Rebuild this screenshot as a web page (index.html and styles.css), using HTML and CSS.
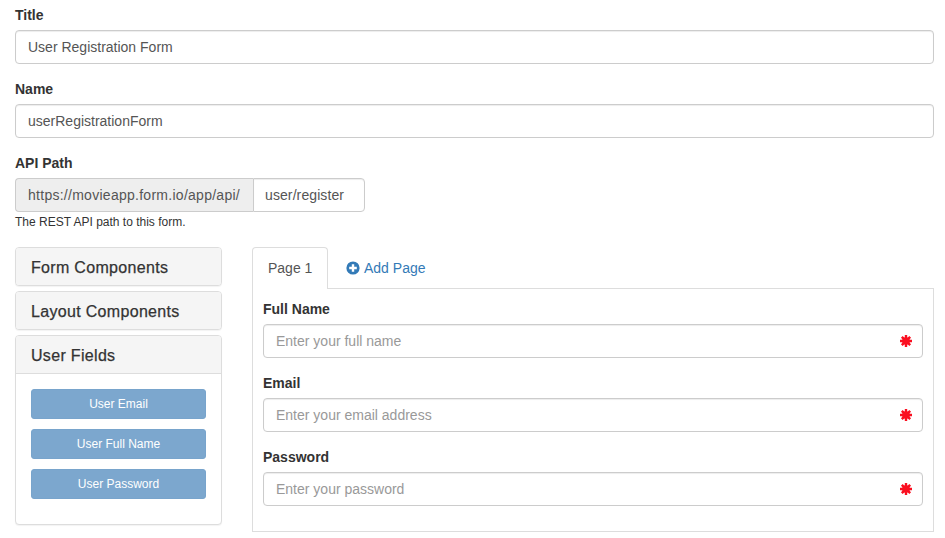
FILE: index.html
```html
<!DOCTYPE html>
<html lang="en">
<head>
<meta charset="utf-8">
<title>User Registration Form</title>
<link rel="stylesheet" href="styles.css">
</head>
<body>
<main class="page">
  <div class="form-group">
    <label class="label">Title</label>
    <input class="control" type="text" value="User Registration Form">
  </div>
  <div class="form-group">
    <label class="label">Name</label>
    <input class="control" type="text" value="userRegistrationForm">
  </div>
  <div class="form-group api-group">
    <label class="label">API Path</label>
    <div class="input-group">
      <span class="addon">https://movieapp.form.io/app/api/</span>
      <input class="control group-control" type="text" value="user/register">
    </div>
    <p class="help">The REST API path to this form.</p>
  </div>
  <div class="builder">
    <aside class="sidebar">
      <section class="panel"><h4 class="panel-heading">Form Components</h4></section>
      <section class="panel"><h4 class="panel-heading">Layout Components</h4></section>
      <section class="panel">
        <h4 class="panel-heading open">User Fields</h4>
        <div class="panel-body">
          <button class="field-btn" type="button">User Email</button>
          <button class="field-btn" type="button">User Full Name</button>
          <button class="field-btn" type="button">User Password</button>
        </div>
      </section>
    </aside>
    <div class="editor">
      <ul class="tabs">
        <li class="tab active">Page 1</li>
        <li class="tab add">
          <svg class="plus" viewBox="0 0 14 14" aria-hidden="true"><circle cx="7" cy="7" r="6.6" fill="#337ab7"/><path d="M3.2 7h7.6M7 3.2v7.6" stroke="#fff" stroke-width="2.4" fill="none"/></svg>
          Add Page
        </li>
      </ul>
      <div class="tab-content">
        <div class="form-group">
          <label class="label">Full Name</label>
          <div class="has-feedback">
            <input class="control" type="text" placeholder="Enter your full name">
            <svg class="req" viewBox="0 0 12 12" aria-hidden="true"><path d="M6 0v12M0 6h12M1.8 1.8l8.4 8.4M10.2 1.8l-8.4 8.4" stroke="#fa0f20" stroke-width="2.4" fill="none"/><circle cx="6" cy="6" r="3.8" fill="#fa0f20"/></svg>
          </div>
        </div>
        <div class="form-group">
          <label class="label">Email</label>
          <div class="has-feedback">
            <input class="control" type="text" placeholder="Enter your email address">
            <svg class="req" viewBox="0 0 12 12" aria-hidden="true"><path d="M6 0v12M0 6h12M1.8 1.8l8.4 8.4M10.2 1.8l-8.4 8.4" stroke="#fa0f20" stroke-width="2.4" fill="none"/><circle cx="6" cy="6" r="3.8" fill="#fa0f20"/></svg>
          </div>
        </div>
        <div class="form-group">
          <label class="label">Password</label>
          <div class="has-feedback">
            <input class="control" type="text" placeholder="Enter your password">
            <svg class="req" viewBox="0 0 12 12" aria-hidden="true"><path d="M6 0v12M0 6h12M1.8 1.8l8.4 8.4M10.2 1.8l-8.4 8.4" stroke="#fa0f20" stroke-width="2.4" fill="none"/><circle cx="6" cy="6" r="3.8" fill="#fa0f20"/></svg>
          </div>
        </div>
      </div>
    </div>
  </div>
</main>
</body>
</html>
```
FILE: styles.css
```css
* { box-sizing: border-box; }
html, body { margin: 0; height: 100%; background: #fff; overflow: hidden; }
body { font: 14px/20px "Liberation Sans", Arial, sans-serif; color: #333; }
.page { padding: 5px 11px 0 15px; }
.form-group { margin-bottom: 15px; }
.api-group { margin-bottom: 17px; }
.label { display: block; margin-bottom: 5px; font-weight: 700; }
.control {
  display: block; width: 100%; height: 34px; padding: 6px 12px;
  font: inherit; color: #555; background: #fff;
  border: 1px solid #ccc; border-radius: 4px;
  box-shadow: inset 0 1px 1px rgba(0,0,0,.075); outline: 0;
}
.control::placeholder { color: #999; opacity: 1; }
.input-group { display: flex; width: 350px; }
.addon {
  flex: none; width: 238px; height: 34px; padding: 6px 12px;
  color: #555; background: #eee; white-space: nowrap; letter-spacing: .27px;
  border: 1px solid #ccc; border-right: 0; border-radius: 4px 0 0 4px;
}
.group-control { flex: 1; min-width: 0; padding-left: 11px; letter-spacing: .1px; border-radius: 0 4px 4px 0; }
.help { margin: 3px 0 0; font-size: 12px; line-height: 15px; color: #333; }
.builder { display: grid; grid-template-columns: 207px 1fr; column-gap: 30px; align-items: start; }
.panel {
  margin-bottom: 5px; background: #fff;
  border: 1px solid #ddd; border-radius: 4px;
  box-shadow: 0 1px 1px rgba(0,0,0,.05); overflow: hidden;
}
.panel-heading {
  margin: 0; padding: 11px 15px 9px; height: 37px;
  font-size: 16px; line-height: 18px; font-weight: 400; color: #333;
  letter-spacing: .32px; -webkit-text-stroke: .25px #333;
  background: #f5f5f5;
}
.panel-heading.open { height: 38px; border-bottom: 1px solid #ddd; }
.panel-body { display: flex; flex-direction: column; gap: 10px; padding: 15px 15px 25px; }
.field-btn {
  display: block; width: 100%; height: 30px; padding: 5px 10px;
  font: 12px/18px "Liberation Sans", Arial, sans-serif; color: #fff;
  background: #7ca7ce; border: 1px solid #78a4cc; border-radius: 3px;
}
.tabs { display: flex; margin: 0; padding: 0; list-style: none; height: 42px; }
.tab { height: 42px; padding: 10px 15px; margin-right: 2px; color: #337ab7; border: 1px solid transparent; border-bottom: 0; white-space: nowrap; }
.tab.active {
  width: 76px; color: #555; background: #fff;
  border-color: #ddd; border-radius: 4px 4px 0 0;
  position: relative; z-index: 1;
}
.tab.add { display: flex; align-items: center; height: 41px; gap: 4px; }
.plus { width: 14px; height: 14px; flex: none; }
.tab-content { margin-top: -1px; padding: 10px 10px 0; height: 244px; border: 1px solid #ddd; }
.has-feedback { position: relative; }
.has-feedback .control { padding-right: 42px; }
.req { position: absolute; top: 11px; right: 11px; width: 12px; height: 12px; }
```
